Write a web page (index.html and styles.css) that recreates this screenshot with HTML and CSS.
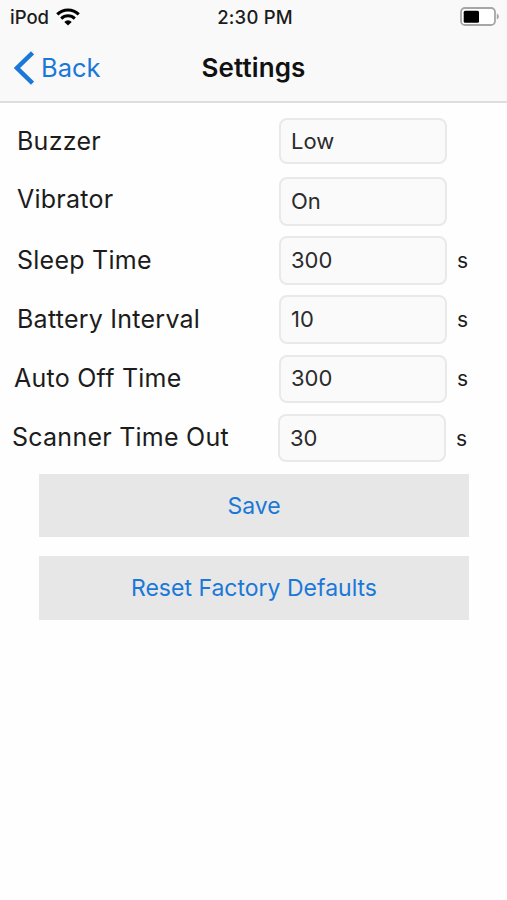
FILE: index.html
```html
<!DOCTYPE html>
<html lang="en">
<head>
	<meta charset="utf-8">
	<title>Settings</title>
	<link rel="stylesheet" href="styles.css">
</head>
<body>
	<header>
		<div class="status-bar">
			<div class="carrier">
				<span>iPod</span>
				<svg class="wifi" width="24" height="18" viewBox="0 0 24 18">
					<path d="M1.3 6.3 A15.4 15.4 0 0 1 22.7 6.3" fill="none" stroke="#000" stroke-width="3.2"/>
					<path d="M5.2 10.6 A9.8 9.8 0 0 1 18.8 10.6" fill="none" stroke="#000" stroke-width="3"/>
					<path d="M12 17.5 L8.3 13.9 A5.2 5.2 0 0 1 15.7 13.9 Z" fill="#000"/>
				</svg>
			</div>
			<span class="time">2:30 PM</span>
			<svg class="battery" width="40" height="20" viewBox="0 0 40 20">
				<rect x="1" y="1" width="34" height="17" rx="4" fill="#fff" stroke="#a6a6a6" stroke-width="1.8"/>
				<rect x="3.7" y="3.7" width="15.3" height="12" rx="1.5" fill="#000"/>
				<path d="M36.8 6.5 Q39 7.5 39 9.5 Q39 11.5 36.8 12.5 Z" fill="#a6a6a6"/>
			</svg>
		</div>
		<div class="nav-bar">
			<a class="back" href="#">
				<svg width="20" height="34" viewBox="0 0 20 34">
					<path d="M18.5 1.8 L3 17 L18.5 32.2" fill="none" stroke="#1a78d8" stroke-width="4.4"/>
				</svg>
				<span>Back</span>
			</a>
			<h1>Settings</h1>
		</div>
	</header>

	<form>
		<div class="row first">
			<label for="buzzer">Buzzer</label>
			<input type="text" id="buzzer" value="Low">
		</div>
		<div class="row vibrator">
			<label for="vibrator">Vibrator</label>
			<input type="text" id="vibrator" value="On">
		</div>
		<div class="row">
			<label for="sleep">Sleep Time</label>
			<input type="text" id="sleep" value="300">
			<span class="unit">s</span>
		</div>
		<div class="row">
			<label for="battery">Battery Interval</label>
			<input type="text" id="battery" value="10">
			<span class="unit">s</span>
		</div>
		<div class="row auto-off">
			<label for="auto-off">Auto Off Time</label>
			<input type="text" id="auto-off" value="300">
			<span class="unit">s</span>
		</div>
		<div class="row scanner">
			<label for="scanner">Scanner Time Out</label>
			<input type="text" id="scanner" value="30">
			<span class="unit">s</span>
		</div>

		<div class="actions">
			<button type="button">Save</button>
			<button type="button">Reset Factory Defaults</button>
		</div>
	</form>
</body>
</html>
```
FILE: styles.css
```css
* {
	box-sizing: border-box;
}

body {
	margin: 0;
	background-color: #fefefe;
	color: #1c1c1c;
	font-family: Inter, "Liberation Sans", sans-serif;
}

header {
	height: 103px;
	background-color: #f9f9f9;
	border-bottom: 2px solid #dedede;
}

.status-bar, .nav-bar {
	display: grid;
	grid-template-columns: 1fr auto 1fr;
	align-items: center;
}

.status-bar {
	height: 33px;
	padding: 0 7px 0 10px;
	font-size: 18.5px;
	font-weight: 500;
}

.carrier {
	display: flex;
	align-items: center;
	gap: 7px;
}

.time {
	letter-spacing: 0.2px;
}

.battery {
	justify-self: end;
}

.nav-bar {
	height: 69px;
	padding: 0 14px;
}

.back {
	display: flex;
	align-items: center;
	gap: 7px;
	color: #1a78d8;
	font-size: 25.5px;
	text-decoration: none;
}

h1 {
	margin: 0;
	color: #111;
	font-size: 26px;
	font-weight: 600;
	letter-spacing: 0.1px;
}

form {
	padding-top: 15px;
}

.row {
	display: flex;
	align-items: center;
	height: 48.5px;
	margin-bottom: 10.7px;
	padding-left: 17px;
}

label {
	width: 262px;
	padding-bottom: 1px;
	font-size: 25px;
	letter-spacing: 0.25px;
}

input {
	width: 168px;
	height: 100%;
	padding: 0 10px 1px;
	border: 2px solid #e9e9e9;
	border-radius: 8px;
	background-color: #fafafa;
	color: #2b2b2b;
	font-family: inherit;
	font-size: 22px;
}

.unit {
	margin-left: 10px;
	font-size: 21px;
}

.first {
	height: 46px;
	margin-bottom: 13px;
}

.first input {
	padding-bottom: 0;
}

.vibrator label {
	padding-bottom: 5px;
}

.auto-off {
	padding-left: 14px;
}

.auto-off label {
	width: 265px;
}

.scanner {
	padding-left: 12px;
}

.scanner label {
	width: 266px;
	padding-bottom: 2px;
}

.actions {
	padding: 1px 0 0 39px;
}

button {
	display: block;
	width: 430px;
	height: 63.5px;
	margin-bottom: 19px;
	border: none;
	background-color: #e7e7e7;
	color: #1a78d8;
	font-family: inherit;
	font-size: 23px;
}
```
